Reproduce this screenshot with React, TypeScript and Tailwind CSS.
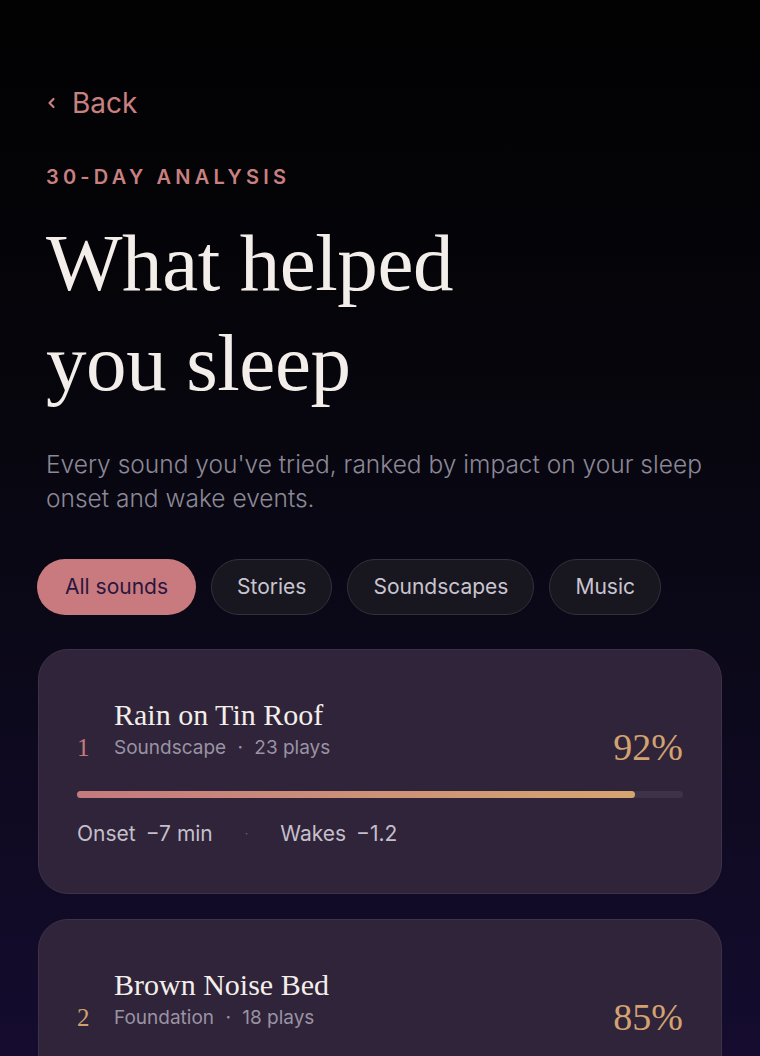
import { useState } from 'react';

interface SoundRank {
  rank: string;
  title: string;
  kind: string;
  plays: number;
  score: number;
  onset: string;
  wakes: string;
  rankColor: string;
}

const sounds: SoundRank[] = [
  { rank: '1', title: 'Rain on Tin Roof', kind: 'Soundscape', plays: 23, score: 92, onset: '−7 min', wakes: '−1.2', rankColor: 'text-[#c47a7e]' },
  { rank: '2', title: 'Brown Noise Bed', kind: 'Foundation', plays: 18, score: 85, onset: '−5 min', wakes: '−0.9', rankColor: 'text-[#d1a070]' },
];

const filters = ['All sounds', 'Stories', 'Soundscapes', 'Music'];

const serif = "font-['Liberation_Serif',serif]";
const sans = "font-['Inter','Liberation_Sans',sans-serif]";

export default function App() {
  const [active, setActive] = useState('All sounds');

  return (
    <div className={`h-[1056px] w-[760px] overflow-hidden bg-gradient-to-b from-[#020203] via-[#07060e] via-40% to-[#150c2f] ${sans}`}>
      <div className="px-[46px] pt-[84px]">
        <button className="flex items-center gap-[15px] text-[#c98081] text-[28px] leading-[38px]">
          <svg width="11" height="16" viewBox="0 0 11 16" fill="none" stroke="currentColor" strokeWidth="2.2" strokeLinecap="round" strokeLinejoin="round">
            <path d="M7.5 4 L3.5 8 L7.5 12" />
          </svg>
          <span>Back</span>
        </button>

        <div className="mt-[43px] text-[20px] leading-[24px] font-semibold tracking-[0.21em] text-[#c98081]">30-DAY ANALYSIS</div>

        <h1 className={`${serif} mt-[24px] text-[81px] leading-[100px] font-normal text-[#f3eee9] tracking-[-0.005em]`}>
          What helped<br />you sleep
        </h1>

        <p className="mt-[34px] text-[24.5px] leading-[34px] font-light text-[#8c8896]">
          Every sound you've tried, ranked by impact on your sleep onset and wake events.
        </p>
      </div>

      <div className="mt-[44px] flex gap-[15px] px-[37px]">
        {filters.map(f => (
          <button
            key={f}
            onClick={() => setActive(f)}
            className={
              f === active
                ? 'h-[56px] px-[28px] rounded-full bg-[#c97a7e] text-[#2a1640] text-[21px]'
                : 'h-[56px] px-[25px] rounded-full bg-[#18161f] border border-[#34313c] text-[#c9c5d0] text-[21px]'
            }
          >
            {f}
          </button>
        ))}
      </div>

      <div className="mt-[34px] flex flex-col gap-[25px] px-[38px]">
        {sounds.map(s => (
          <div key={s.title} className="rounded-[30px] bg-[#2f2439] border border-[#3d3247] px-[38px] pt-[50px] pb-[45px]">
            <div className="flex items-end justify-between">
              <div className="flex items-end">
                <div className={`${serif} w-[37px] text-[25px] leading-[32px] ${s.rankColor}`}>{s.rank}</div>
                <div>
                  <div className={`${serif} text-[30px] leading-[30px] text-[#f3eee9]`}>{s.title}</div>
                  <div className="mt-[2px] text-[19px] leading-[32px] text-[#9a93a3]">
                    {s.kind} <span className="mx-[6px]">·</span> {s.plays} plays
                  </div>
                </div>
              </div>
              <div className={`${serif} text-[38px] leading-[44px] text-[#d4a271] mb-[-5px]`}>{s.score}%</div>
            </div>

            <div className="mt-[27px] h-[7px] rounded-full bg-[#3d3348]">
              <div
                className="h-full rounded-full bg-gradient-to-r from-[#c47a7e] to-[#d5a56f]"
                style={{ width: `${s.score}%` }}
              />
            </div>

            <div className="mt-[22px] flex items-center text-[21px] leading-[28px] text-[#c4bfcb]">
              <span>Onset</span>
              <span className="ml-[10px]">{s.onset}</span>
              <span className="mx-[32px] text-[#6d6478] text-[12px]">·</span>
              <span>Wakes</span>
              <span className="ml-[10px]">{s.wakes}</span>
            </div>
          </div>
        ))}
      </div>
    </div>
  );
}
